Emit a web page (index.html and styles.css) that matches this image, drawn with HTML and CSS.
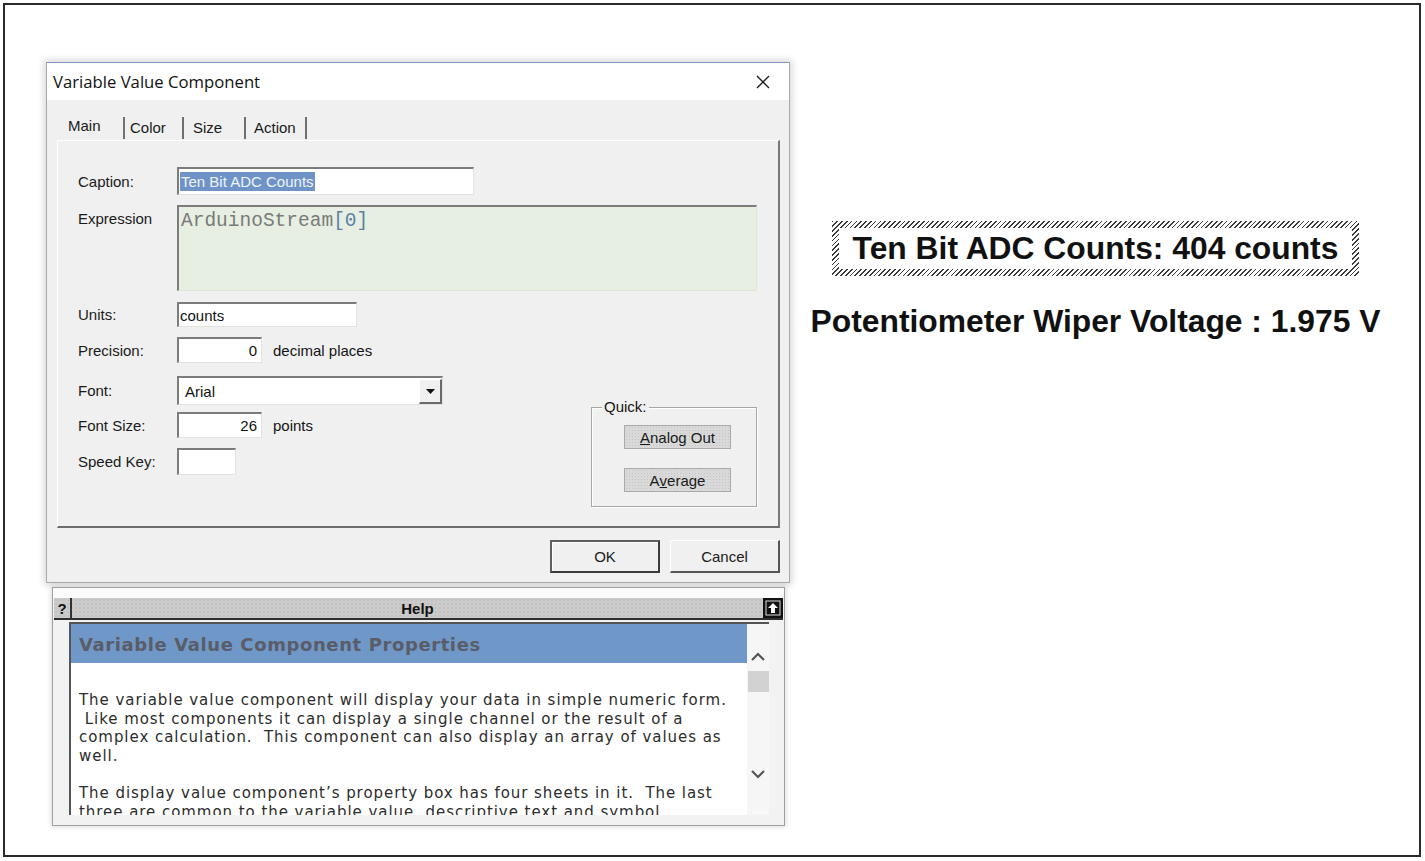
FILE: index.html
```html
<!DOCTYPE html>
<html lang="en">
<head>
<meta charset="utf-8">
<title>Variable Value Component</title>
<link rel="stylesheet" href="styles.css">
</head>
<body>
<div class="frame">
  <div class="left">
    <div class="dialog">
      <div class="titlebar">
        <span class="title">Variable Value Component</span>
        <svg class="close" width="14" height="14" viewBox="0 0 14 14"><path d="M1 1 L13 13 M13 1 L1 13" stroke="#1a1a1a" stroke-width="1.3" fill="none"/></svg>
      </div>
      <div class="dbody">
        <div class="tabs">
          <div class="tab tab-main">Main</div>
          <div class="tab tab-color">Color</div>
          <div class="tab tab-size">Size</div>
          <div class="tab tab-action">Action</div>
        </div>
        <div class="panel">
          <div class="row row-caption">
            <span class="lbl">Caption:</span>
            <div class="inp inp-caption"><span class="sel">Ten Bit ADC Counts</span></div>
          </div>
          <div class="row row-expr">
            <span class="lbl lbl-top">Expression</span>
            <div class="expr">ArduinoStream<span class="brk">[0]</span></div>
          </div>
          <div class="lower">
            <div class="fields">
              <div class="row row-units">
                <span class="lbl">Units:</span>
                <div class="inp inp-units">counts</div>
              </div>
              <div class="row row-prec">
                <span class="lbl">Precision:</span>
                <div class="inp inp-num">0</div>
                <span class="after">decimal places</span>
              </div>
              <div class="row row-font">
                <span class="lbl">Font:</span>
                <div class="inp select"><span class="selval">Arial</span><span class="dd"><svg width="9" height="5" viewBox="0 0 9 5"><path d="M0 0 H9 L4.5 5 Z" fill="#111"/></svg></span></div>
              </div>
              <div class="row row-fsize">
                <span class="lbl">Font Size:</span>
                <div class="inp inp-num">26</div>
                <span class="after">points</span>
              </div>
              <div class="row row-key">
                <span class="lbl">Speed Key:</span>
                <div class="inp inp-key"></div>
              </div>
            </div>
            <div class="quick">
              <span class="legend">Quick:</span>
              <div class="qbtn"><u>A</u>nalog Out</div>
              <div class="qbtn">A<u>v</u>erage</div>
            </div>
          </div>
        </div>
        <div class="actions">
          <div class="btn btn-ok">OK</div>
          <div class="btn btn-cancel">Cancel</div>
        </div>
      </div>
    </div>
    <div class="help">
      <div class="hstrip"></div>
      <div class="hbar">
        <span class="hq">?</span>
        <span class="htitle">Help</span>
        <span class="hicon"><svg width="20" height="20" viewBox="0 0 20 20"><rect x="0" y="0" width="20" height="20" fill="#111"/><rect x="3" y="3" width="14" height="14" fill="none" stroke="#ddd" stroke-width="1"/><path d="M10 5 L15 10 H12 V15 H8 V10 H5 Z" fill="#fff"/></svg></span>
      </div>
      <div class="hcontent">
        <div class="hmain">
          <div class="hhead">Variable Value Component Properties</div>
          <div class="htext">The variable value component will display your data in simple numeric form.
 Like most components it can display a single channel or the result of a
complex calculation.  This component can also display an array of values as
well.

The display value component’s property box has four sheets in it.  The last
three are common to the variable value, descriptive text and symbol</div>
        </div>
        <div class="scroll">
          <svg class="chev chev-up" width="16" height="10" viewBox="0 0 16 10"><path d="M2 8 L8 2 L14 8" stroke="#555" stroke-width="2.2" fill="none"/></svg>
          <div class="thumb"></div>
          <svg class="chev chev-down" width="16" height="10" viewBox="0 0 16 10"><path d="M2 2 L8 8 L14 2" stroke="#555" stroke-width="2.2" fill="none"/></svg>
        </div>
      </div>
    </div>
  </div>
  <div class="right">
    <div class="hatch"><div class="hinner">Ten Bit ADC Counts: 404 counts</div></div>
    <div class="pot">Potentiometer Wiper Voltage : 1.975 V</div>
  </div>
</div>
</body>
</html>
```
FILE: styles.css
```css
* { box-sizing: border-box; }
html, body { margin: 0; padding: 0; background: #fff; }
body { font-family: "Liberation Sans", Arial, sans-serif; color: #141414; }

.frame {
  margin: 3px;
  width: 1418px;
  height: 854px;
  border: 2px solid #2b2b2b;
  display: flex;
  background: #fff;
}

.left {
  width: 785px;
  flex: none;
  padding: 57px 0 0 41px;
  display: flex;
  flex-direction: column;
}

/* ---------- dialog ---------- */
.dialog {
  width: 744px;
  height: 521px;
  display: flex;
  flex-direction: column;
  background: #f0f0f0;
  border: 1px solid #a9a9a9;
  border-top-color: #7f9cc6;
  box-shadow: 0 0 7px 2px rgba(0, 0, 0, 0.16);
}
.titlebar {
  height: 37px;
  flex: none;
  background: #fff;
  display: flex;
  align-items: center;
  justify-content: space-between;
  padding: 0 19px 0 6px;
}
.title {
  font-family: "Open Sans", "Noto Sans", sans-serif;
  font-size: 16.7px;
  color: #111;
}
.close { display: block; }

.dbody {
  flex: 1;
  padding: 0 9px 0 10px;
  display: flex;
  flex-direction: column;
}
.tabs {
  height: 40px;
  flex: none;
  display: flex;
  align-items: flex-end;
  padding-bottom: 1px;
  font-size: 15px;
}
.tab {
  height: 22px;
  line-height: 22px;
  color: #1a1a1a;
}
.tab-main { width: 66px; padding-left: 11px; line-height: 18px; }
.tab-color { width: 59px; padding-left: 5px; border-left: 2px solid #6f6f6f; }
.tab-size { width: 62px; padding-left: 9px; border-left: 2px solid #6f6f6f; }
.tab-action { width: 63px; padding-left: 8px; border-left: 2px solid #6f6f6f; border-right: 2px solid #6f6f6f; }

.panel {
  height: 388px;
  flex: none;
  border-top: 1px solid #fff;
  border-left: 1px solid #fff;
  border-right: 2px solid #787878;
  border-bottom: 2px solid #6c6c6c;
  padding: 26px 21px 0 20px;
  font-size: 15px;
}
.row { display: flex; align-items: center; }
.lbl { width: 99px; flex: none; color: #1a1a1a; }
.lbl-top { align-self: flex-start; padding-top: 5px; }
.inp {
  background: #fff;
  border-top: 2px solid #7c7c7c;
  border-left: 2px solid #7c7c7c;
  border-right: 1px solid #e2e2e2;
  border-bottom: 1px solid #e2e2e2;
  display: flex;
  align-items: center;
  padding-left: 1px;
  color: #111;
}
.row-caption { height: 28px; margin-bottom: 10px; }
.inp-caption { width: 297px; height: 28px; }
.sel {
  background: #6f93c6;
  color: #eef3fb;
  line-height: 19px;
  padding: 0 1px;
}
.row-expr { height: 86px; margin-bottom: 11px; align-items: flex-start; }
.expr {
  width: 581px;
  height: 86px;
  background: #e6efe1;
  border-top: 2px solid #7c7c7c;
  border-left: 2px solid #7c7c7c;
  border-right: 1px solid #dde6d8;
  border-bottom: 1px solid #dde6d8;
  padding: 4px 2px;
  font-family: "Liberation Mono", "Courier New", monospace;
  font-size: 19.5px;
  line-height: 20px;
  color: #7a7a7a;
}
.brk { color: #5c7fa6; }

.lower { display: flex; justify-content: space-between; }
.fields { display: flex; flex-direction: column; }
.row-units { height: 25px; margin-bottom: 10px; }
.inp-units { width: 180px; height: 25px; }
.row-prec { height: 26px; margin-bottom: 13px; }
.inp-num { width: 85px; height: 26px; justify-content: flex-end; padding-right: 4px; }
.after { margin-left: 11px; }
.row-font { height: 29px; margin-bottom: 7px; }
.select { width: 266px; height: 29px; justify-content: space-between; padding-left: 6px; align-items: stretch; }
.selval { display: flex; align-items: center; }
.dd {
  width: 23px;
  margin: 1px 0 0 0;
  background: #f0f0f0;
  border-left: 1px solid #fff;
  border-top: 1px solid #fff;
  border-right: 2px solid #6a6a6a;
  border-bottom: 2px solid #6a6a6a;
  display: flex;
  align-items: center;
  justify-content: center;
}
.dd svg { display: block; }
.row-fsize { height: 26px; margin-bottom: 10px; }
.row-key { height: 27px; }
.inp-key { width: 59px; height: 27px; }

.quick {
  position: relative;
  width: 166px;
  height: 100px;
  margin-top: 105px;
  border: 1px solid #a6a6a6;
  box-shadow: inset 1px 1px 0 #fff, 1px 1px 0 #fff;
  padding: 17px 24px 0 32px;
  display: flex;
  flex-direction: column;
  gap: 19px;
}
.legend {
  position: absolute;
  top: -10px;
  left: 10px;
  background: #f0f0f0;
  padding: 0 2px;
  line-height: 18px;
}
.qbtn {
  width: 107px;
  height: 24px;
  background-color: #d9d9d9;
  background-image: radial-gradient(circle, #c4c4c4 0.6px, transparent 0.8px);
  background-size: 3px 3px;
  border: 1px solid #a9a9a9;
  display: flex;
  align-items: center;
  justify-content: center;
  color: #1a1a1a;
}
.qbtn u { text-decoration-thickness: 1px; }

.actions {
  display: flex;
  justify-content: flex-end;
  gap: 10px;
  padding-top: 12px;
}
.btn {
  width: 110px;
  height: 33px;
  background: #f0f0f0;
  font-size: 15px;
  color: #1a1a1a;
  display: flex;
  align-items: center;
  justify-content: center;
}
.btn-ok {
  border: 2px solid #5e5e5e;
  border-right-color: #3a3a3a;
  border-bottom-color: #3a3a3a;
  box-shadow: inset 1px 1px 0 #fff;
}
.btn-cancel {
  border-top: 1px solid #fff;
  border-left: 1px solid #fff;
  border-right: 2px solid #555;
  border-bottom: 2px solid #555;
}

/* ---------- help ---------- */
.help {
  margin: 4px 0 0 6px;
  width: 733px;
  height: 239px;
  background: #f2f2f2;
  border: 1px solid #a0a0a0;
  box-shadow: 0 0 5px 1px rgba(0, 0, 0, 0.14);
  display: flex;
  flex-direction: column;
}
.hstrip { height: 10px; background: #fbfbfb; flex: none; }
.hbar {
  height: 22px;
  flex: none;
  margin: 0 1px;
  background-color: #cbcbcb;
  background-image: radial-gradient(circle, #b5b5b5 0.6px, transparent 0.8px);
  background-size: 4px 4px;
  border-bottom: 2px solid #2e2e2e;
  display: flex;
  align-items: stretch;
  font-weight: bold;
  font-size: 15px;
  color: #111;
}
.hq {
  width: 18px;
  border-right: 2px solid #333;
  display: flex;
  align-items: center;
  justify-content: center;
}
.htitle { flex: 1; text-align: center; line-height: 21px; }
.hicon { width: 20px; display: flex; }
.hicon svg { display: block; }
.hcontent {
  margin: 2px 0 0 16px;
  width: 700px;
  height: 193px;
  border-top: 2px solid #555;
  border-left: 2px solid #555;
  background: #fff;
  display: flex;
  flex: none;
}
.hmain { width: 676px; overflow: hidden; }
.hhead {
  height: 39px;
  background: #6f98c8;
  padding-left: 8px;
  line-height: 42px;
  font-family: "DejaVu Sans", Verdana, sans-serif;
  font-weight: bold;
  font-size: 18px;
  letter-spacing: 0.6px;
  color: #5a5c68;
  white-space: nowrap;
}
.htext {
  padding: 28px 0 0 8px;
  font-family: "DejaVu Sans", Verdana, sans-serif;
  font-size: 15px;
  letter-spacing: 0.95px;
  line-height: 18.6px;
  color: #2c2c2c;
  white-space: pre;
}
.scroll {
  width: 22px;
  background: #f6f6f6;
  display: flex;
  flex-direction: column;
  align-items: center;
  padding-top: 28px;
}
.chev { display: block; }
.thumb { width: 21px; height: 21px; background: #d2d2d2; margin-top: 9px; }
.chev-down { margin-top: 77px; }

/* ---------- right ---------- */
.right {
  flex: 1;
  display: flex;
  flex-direction: column;
  align-items: center;
  padding: 216px 18px 0 0;
}
.hatch {
  width: 527px;
  height: 55px;
  padding: 7px;
  background: repeating-linear-gradient(135deg, #3a3a3a 0 1.2px, #fff 1.2px 3.4px);
}
.hinner {
  height: 41px;
  background: #fff;
  display: flex;
  align-items: center;
  justify-content: center;
  font-weight: bold;
  font-size: 31.8px;
  color: #111;
  white-space: nowrap;
}
.pot {
  margin-top: 27px;
  font-weight: bold;
  font-size: 31.8px;
  line-height: 36px;
  color: #111;
  white-space: nowrap;
}
```
